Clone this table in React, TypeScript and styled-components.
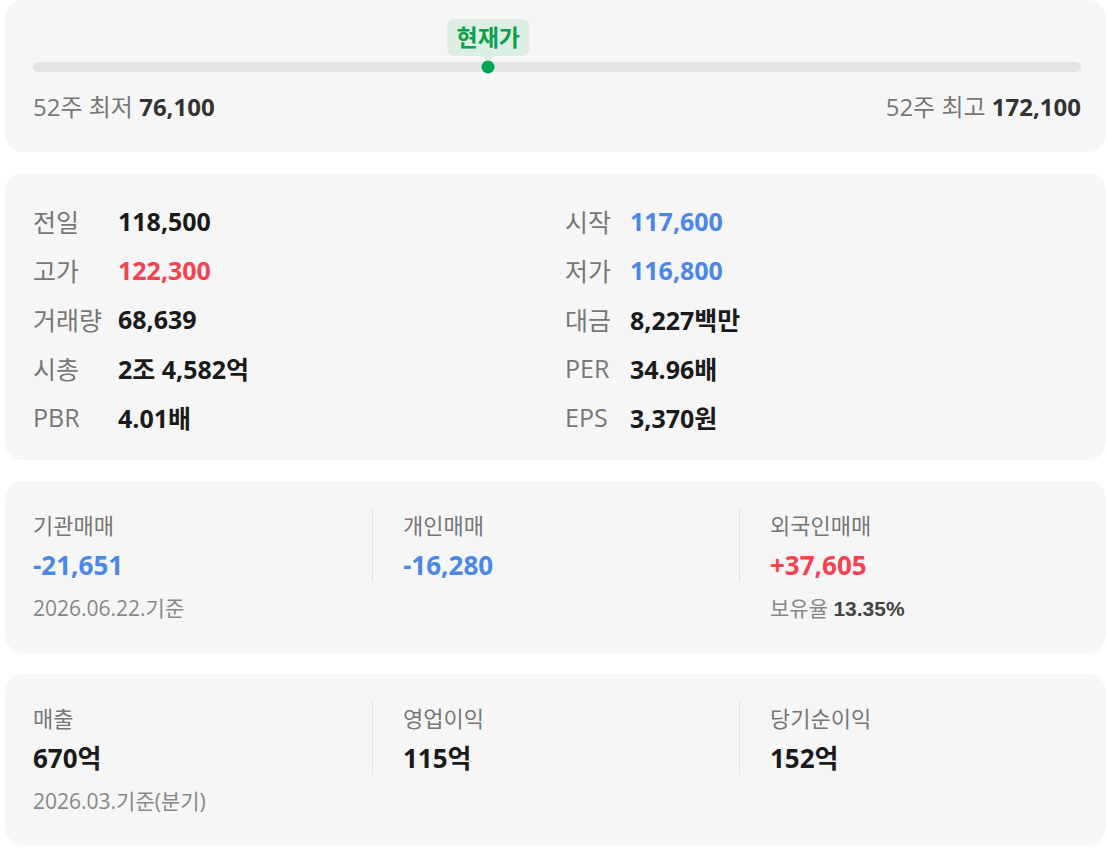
import React from 'react'
import styled, { createGlobalStyle } from 'styled-components'

const GlobalStyle = createGlobalStyle`
  html, body {
    margin: 0;
    padding: 0;
    background: #ffffff;
  }
  body {
    font-family: 'Open Sans', 'Noto Sans CJK KR', sans-serif;
    color: #1a1a1a;
  }
`;

type Tone = 'plain' | 'up' | 'down';

const toneColor = (t: Tone) =>
  t === 'up' ? '#f5424f' : t === 'down' ? '#4b87e6' : '#1a1a1a';

const Page = styled.div`
  display: flex;
  flex-direction: column;
  gap: 21px;
  padding-left: 5px;
  width: 1101px;
`;

const Card = styled.section`
  background: #f6f6f6;
  border-radius: 18px;
`;

/* ---- 52 week range ---- */

const RangeCard = styled(Card)`
  padding: 62px 25px 30px 28px;
`;

const Track = styled.div`
  position: relative;
  height: 10px;
  border-radius: 5px;
  background: #e4e4e4;
`;

const Dot = styled.div`
  position: absolute;
  top: 50%;
  width: 13px;
  height: 13px;
  border-radius: 50%;
  background: #00a651;
  transform: translate(-50%, -50%);
`;

const Bubble = styled.div`
  position: absolute;
  bottom: 16px;
  transform: translateX(-50%);
  padding: 0 9px;
  height: 37px;
  line-height: 37px;
  border-radius: 7px;
  background: #ddefe4;
  color: #0aa04c;
  font-size: 23px;
  font-weight: 700;
  white-space: nowrap;

  &::after {
    content: '';
    position: absolute;
    left: 50%;
    bottom: -6px;
    margin-left: -6px;
    border-left: 6px solid transparent;
    border-right: 6px solid transparent;
    border-top: 6px solid #ddefe4;
  }
`;

const RangeLabels = styled.div`
  display: flex;
  justify-content: space-between;
  margin-top: 20px;
  font-size: 24px;
  line-height: 30px;
`;

const RangeText = styled.span`
  color: #777777;

  b {
    color: #333333;
    font-weight: 700;
  }
`;

/* ---- price table ---- */

const QuoteCard = styled(Card)`
  display: grid;
  grid-template-columns: 1fr 1fr;
  column-gap: 19px;
  padding: 23px 28px 19px;
`;

const QuoteCol = styled.div<{ $labelWidth: number }>`
  display: grid;
  grid-template-columns: ${(p) => p.$labelWidth}px 1fr;
  grid-auto-rows: 49px;
  align-items: center;
`;

const QuoteLabel = styled.span`
  font-size: 25px;
  color: #777777;
  white-space: nowrap;
`;

const QuoteValue = styled.span<{ $tone: Tone }>`
  font-size: 25px;
  font-weight: 700;
  color: ${(p) => toneColor(p.$tone)};
`;

/* ---- three column stats ---- */

const StatsCard = styled(Card)`
  display: grid;
  grid-template-columns: repeat(3, 1fr);
  padding: 28px 0 30px;
`;

const StatCol = styled.div`
  display: flex;
  flex-direction: column;
`;

const StatBlock = styled.div<{ $first?: boolean }>`
  display: flex;
  flex-direction: column;
  gap: 8px;
  padding-left: ${(p) => (p.$first ? 28 : 30)}px;
  border-left: ${(p) => (p.$first ? 'none' : '1px solid #e2e2e2')};
`;

const StatLabel = styled.span`
  font-size: 22px;
  line-height: 32px;
  color: #777777;
`;

const StatValue = styled.span<{ $tone: Tone }>`
  font-size: 26px;
  line-height: 33px;
  font-weight: 700;
  color: ${(p) => toneColor(p.$tone)};
`;

const Note = styled.div<{ $first?: boolean }>`
  margin-top: 12px;
  padding-left: ${(p) => (p.$first ? 28 : 31)}px;
  min-height: 28px;
  font-size: 21px;
  line-height: 28px;
  color: #888888;

  b {
    font-family: 'Liberation Sans', Arial, sans-serif;
    font-weight: 700;
    color: #444444;
  }
`;

interface Stat {
  label: string;
  value: string;
  tone: Tone;
  note?: React.ReactNode;
}

const StatsRow = ({ items }: { items: Stat[] }) => (
  <StatsCard>
    {items.map((s, i) => (
      <StatCol key={s.label}>
        <StatBlock $first={i === 0}>
          <StatLabel>{s.label}</StatLabel>
          <StatValue $tone={s.tone}>{s.value}</StatValue>
        </StatBlock>
        <Note $first={i === 0}>{s.note}</Note>
      </StatCol>
    ))}
  </StatsCard>
);

const leftQuotes: [string, string, Tone][] = [
  ['전일', '118,500', 'plain'],
  ['고가', '122,300', 'up'],
  ['거래량', '68,639', 'plain'],
  ['시총', '2조 4,582억', 'plain'],
  ['PBR', '4.01배', 'plain'],
];

const rightQuotes: [string, string, Tone][] = [
  ['시작', '117,600', 'down'],
  ['저가', '116,800', 'down'],
  ['대금', '8,227백만', 'plain'],
  ['PER', '34.96배', 'plain'],
  ['EPS', '3,370원', 'plain'],
];

const trading: Stat[] = [
  { label: '기관매매', value: '-21,651', tone: 'down', note: '2026.06.22.기준' },
  { label: '개인매매', value: '-16,280', tone: 'down' },
  {
    label: '외국인매매',
    value: '+37,605',
    tone: 'up',
    note: (
      <>
        보유율 <b>13.35%</b>
      </>
    ),
  },
];

const earnings: Stat[] = [
  { label: '매출', value: '670억', tone: 'plain', note: '2026.03.기준(분기)' },
  { label: '영업이익', value: '115억', tone: 'plain' },
  { label: '당기순이익', value: '152억', tone: 'plain' },
];

const low = 76100;
const high = 172100;
const current = 117800;

export default function App() {
  const pos = ((current - low) / (high - low)) * 100;

  return (
    <>
      <GlobalStyle />
      <Page>
        <RangeCard>
          <Track>
            <Bubble style={{ left: `${pos}%` }}>현재가</Bubble>
            <Dot style={{ left: `${pos}%` }} />
          </Track>
          <RangeLabels>
            <RangeText>
              52주 최저 <b>76,100</b>
            </RangeText>
            <RangeText>
              52주 최고 <b>172,100</b>
            </RangeText>
          </RangeLabels>
        </RangeCard>

        <QuoteCard>
          <QuoteCol $labelWidth={85}>
            {leftQuotes.map(([l, v, t]) => (
              <React.Fragment key={l}>
                <QuoteLabel>{l}</QuoteLabel>
                <QuoteValue $tone={t}>{v}</QuoteValue>
              </React.Fragment>
            ))}
          </QuoteCol>
          <QuoteCol $labelWidth={65}>
            {rightQuotes.map(([l, v, t]) => (
              <React.Fragment key={l}>
                <QuoteLabel>{l}</QuoteLabel>
                <QuoteValue $tone={t}>{v}</QuoteValue>
              </React.Fragment>
            ))}
          </QuoteCol>
        </QuoteCard>

        <StatsRow items={trading} />
        <StatsRow items={earnings} />
      </Page>
    </>
  );
}
